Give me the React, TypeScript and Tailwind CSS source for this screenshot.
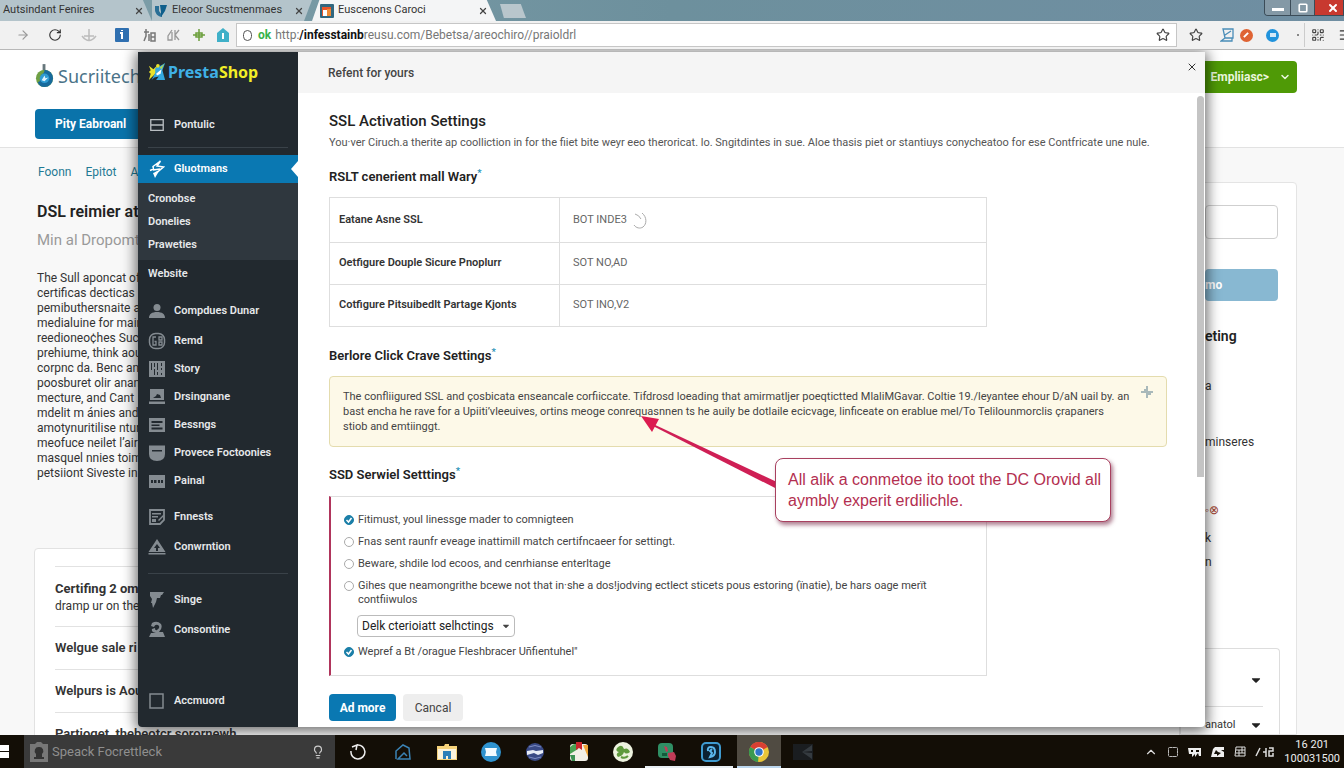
import type { ReactNode } from 'react';
import {
  ArrowRight,
  ChevronDown,
  ChevronUp,
  Lightbulb,
  Menu,
  QrCode,
  RotateCw,
  Square,
  Star,
  X,
} from 'lucide-react';
import { FaCaretDown } from 'react-icons/fa';

/* ---------- icons ---------- */

function Glyph({ children, size = 'size-[18px]' }: { children: ReactNode; size?: string }) {
  return (
    <svg viewBox="0 0 18 18" className={`${size} shrink-0`} fill="currentColor" aria-hidden="true">
      {children}
    </svg>
  );
}

const RowsIcon = () => (
  <Glyph size="size-4">
    <path d="M2 3h14v12H2zM2 9h14" fill="none" stroke="#b9bec2" strokeWidth="1.500" />
  </Glyph>
);
const BoltIcon = () => (
  <Glyph>
    <path d="M12.500 1 5 6.500l.5 2.500L2 10.500M12.500 1 9 6l6.500 1L10 11.500l-3 1.500M12 9l-7 1" fill="none" stroke="currentColor" strokeWidth="1.500" />
    <path d="m5 13 6-2-4 7z" />
  </Glyph>
);
const UserIcon = () => (
  <Glyph>
    <circle cx="9" cy="5.500" r="3.500" />
    <path d="M1 16c0-4 3-6 8-6s8 2 8 6z" />
  </Glyph>
);
const GlobeIcon = () => (
  <Glyph>
    <rect x="1.500" y="1.500" width="15" height="15" rx="6" fill="none" stroke="currentColor" strokeWidth="1.500" />
    <path d="M8 5H5v8h3V9.500H6.500M11 5h3v3h-3zm0 5h3v3h-3z" fill="none" stroke="currentColor" strokeWidth="1.300" />
  </Glyph>
);
const SlidersIcon = () => (
  <Glyph>
    <path fillRule="evenodd" d="M1 1h16v16H1zM3 3v7h1V3zm3 0v4h1V3zm0 6v6h1V9zm3-6v7h1V3zm0 9v3h1v-3zm4-9v3h1V3zm0 5v2h1V8zm0 5v2h1v-2z" />
  </Glyph>
);
const PictureIcon = () => (
  <Glyph>
    <path fillRule="evenodd" d="M2 1h14v11H2zm3 9h8l-1-3-3-1-1 2z" />
    <path d="M1 13.500h16V16H1z" />
  </Glyph>
);
const ListIcon = () => (
  <Glyph>
    <path fillRule="evenodd" d="M1 2h16v14H1zM3.500 5v2h11V5zm0 3.500V10h8V8.500zm0 3v2h11v-2z" />
  </Glyph>
);
const PocketIcon = () => (
  <Glyph>
    <path fillRule="evenodd" d="M1 1.500h16V10q0 7-8 7t-8-7zM4 6v1.500h10V6z" />
  </Glyph>
);
const FilmIcon = () => (
  <Glyph>
    <path fillRule="evenodd" d="M1 3h16v13H1zM3 8v3h2V8zm3 0v3h2.500V8zm4 0v3h2V8zm3 0v3h2V8z" />
  </Glyph>
);
const FormIcon = () => (
  <Glyph>
    <path d="M2 2h14v10l-4 4H2z" fill="none" stroke="currentColor" strokeWidth="1.800" />
    <path d="M4 5h9v1.500H4zm0 3h6v1.500H4zm0 3h4v3H4zm6 1 5-5 1 1-5 5z" />
  </Glyph>
);
const WarningIcon = () => (
  <Glyph>
    <path fillRule="evenodd" d="M9 1 17.500 14H.500zm0 5-3 4h2v3h2v-3h2z" />
    <path d="M.500 15h17v1.500H.500z" />
  </Glyph>
);
const FunnelIcon = () => (
  <Glyph>
    <path d="M2 1h14l-2 3h-1l-1 3H9L8 11l-3 6-1-5H3l1-4-2-3z" />
  </Glyph>
);
const PersonIcon = () => (
  <Glyph>
    <path fillRule="evenodd" d="M4 2q5-3 9 1 2 4-2 8h4l2 5H1l2-4h5Q3 11 4 8l3-1q0 3 2 2 4-3 1-5-3-1-4 2L3 5z" />
  </Glyph>
);
const BoxIcon = () => (
  <Glyph>
    <path d="M2 2h13v14H2z" fill="none" stroke="currentColor" strokeWidth="1.500" />
  </Glyph>
);

function PrestaMark() {
  return (
    <svg viewBox="0 0 20 20" className="size-[18px] shrink-0" aria-hidden="true">
      <path d="M1 3 6 7l3-3 2 5-4 4-6 6 2-7-2-2 2-2z" fill="#e9e22b" />
      <path d="M8 6q3-3 6-3l5-3-3 8 3 11H9l3-4-5 1-3 3 4-8z" fill="#35a8e0" />
      <path d="M9 3a2 2 0 0 1 4 0l-1 2H9z" fill="#e9e22b" />
      <path d="m9 12 6-5-1 5-4 2z" fill="#fff" />
      <path d="m13 5 5-4-3 6z" fill="#b7d64a" />
    </svg>
  );
}

function FlaskMark() {
  return (
    <svg viewBox="0 0 20 26" className="h-[25px] w-[19px] shrink-0" aria-hidden="true">
      <path d="M8 1h3v7H8z" fill="#67777c" />
      <circle cx="10" cy="16" r="9" fill="#6fa044" />
      <path d="M10 7a9 9 0 0 1 0 18c-4 0-6-2-7-5 4 0 2-6 4-8 2-1 3-2 3-5z" fill="#176a9c" />
      <circle cx="10" cy="16" r="5" fill="#2f9cd3" />
      <path d="m7 18 3-5 1 3 3-1-4 4z" fill="#dff3ff" />
    </svg>
  );
}

/* ---------- browser ---------- */

const tabs = [
  { title: 'Autsindant Fenires', width: 'w-[152px]', fill: 'bg-[#b4c4cb]', pad: 'pl-[3px]', clip: '[clip-path:polygon(0_0,94%_0,100%_100%,0_100%)]' },
  { title: 'Eleoor Sucstmenmaes', width: 'w-[160px]', fill: 'bg-[#b4c4cb]', pad: 'pl-0.5', clip: '[clip-path:polygon(0_0,100%_0,95%_100%,0_100%)]' },
  { title: 'Euscenons Caroci', width: 'w-[184px]', fill: 'bg-[#f4f5f6]', pad: 'pl-2', clip: '[clip-path:polygon(4%_0,95%_0,100%_100%,0_100%)]' },
];

function TabIcon({ index }: { index: number }) {
  if (index === 0) return null;
  if (index === 1) {
    return (
      <svg viewBox="0 0 14 14" className="size-3.5 shrink-0" aria-hidden="true">
        <path d="M1 2h4v5l3 4v2C4 13 1 9 1 6z" fill="#2a6f96" />
        <path d="M6 1h7l-2 6-4 6V8z" fill="#0f5f8c" />
      </svg>
    );
  }
  return (
    <svg viewBox="0 0 14 14" className="size-3.5 shrink-0" aria-hidden="true">
      <rect width="14" height="14" rx="1" fill="#31677f" />
      <path d="M2 3h9v9H2z" fill="#e8562a" />
      <path d="M3 6h4v6H3z" fill="#fff" />
      <path d="M7 5h4v7H7z" fill="#f08a34" />
    </svg>
  );
}

function TabStrip() {
  return (
    <div className="flex h-[21px] shrink-0 overflow-hidden bg-gradient-to-r from-[#7fa0aa] via-[#6d909d] to-[#6f8ea2]">
      {tabs.map((tab, i) => (
        <div key={tab.title} className={`flex items-center gap-1 pr-2 ${tab.width} ${tab.fill} ${tab.pad} ${tab.clip}`}>
          <TabIcon index={i} />
          <span className="flex-1 text-[11px] whitespace-nowrap text-[#333]">{tab.title}</span>
          <button aria-label="Close tab" className="text-[#444]">
            <X className="size-2.5" strokeWidth={3} />
          </button>
        </div>
      ))}
      <button aria-label="New tab" className="mt-1 ml-1 h-3.5 w-[26px] bg-[#b9c6cc] [clip-path:polygon(0_0,80%_0,100%_100%,15%_100%)]" />
      <div className="ml-auto flex h-4 overflow-hidden rounded-bl border border-t-0 border-[#3b4c58] text-white">
        <button aria-label="Minimize" className="flex w-[25px] items-center justify-center bg-[#8499a6]">
          <span className="mt-1 h-[3px] w-3 bg-white" />
        </button>
        <button aria-label="Restore" className="flex w-[25px] items-center justify-center border-x border-[#3b4c58] bg-[#8499a6]">
          <Square className="size-2.5" strokeWidth={4} />
        </button>
        <button aria-label="Close" className="flex w-7 items-center justify-center bg-[#c8392f] pl-2">
          <X className="size-3" strokeWidth={4} />
        </button>
      </div>
    </div>
  );
}

function Toolbar() {
  return (
    <div className="flex h-[29px] shrink-0 items-center border-b border-[#b8b8b8] bg-[#f1f1f1] text-[#666]">
      <div className="flex w-[236px] shrink-0 items-center justify-between pr-1.5 pl-4">
        <ArrowRight className="size-3.5 text-[#999]" />
        <RotateCw className="ml-2 size-3.5 text-[#333]" />
        <svg viewBox="0 0 16 14" className="ml-2 h-3.5 w-4" fill="none" stroke="#bcbcbc" strokeWidth="1.500" aria-hidden="true">
          <path d="M8 1v11M1 8q7 9 14 0M3 8h10" />
        </svg>
        <svg viewBox="0 0 14 14" className="ml-2 size-3.5" aria-hidden="true">
          <rect width="14" height="14" rx="1" fill="#2f6fb0" />
          <path d="M5 4h3v7H6V6H5zM6 2h2v1H6z" fill="#fff" />
        </svg>
        <svg viewBox="0 0 14 14" className="ml-1 size-3.5" fill="none" stroke="#777" strokeWidth="1.500" aria-hidden="true">
          <path d="M1 4h5M3 1v7l-2 5M6 6v7M8 5h4v8H8zM8 9h4" />
        </svg>
        <svg viewBox="0 0 14 14" className="size-3.5" fill="none" stroke="#999" strokeWidth="1.300" aria-hidden="true">
          <path d="M5 2 1 8v4h4V4M12 2 8 7l4 5M8 2v10" />
        </svg>
        <svg viewBox="0 0 14 14" className="size-3.5" fill="none" stroke="#6c9f3c" strokeWidth="1.500" aria-hidden="true">
          <path d="M7 1v12M1 7h12M4 5h6v4H4z" />
        </svg>
        <svg viewBox="0 0 14 14" className="size-3.5" aria-hidden="true">
          <path d="M7 0 13 5v9H1V5z" fill="#3fb0c8" />
          <path d="M6 5h2v6H6z" fill="#fff" />
        </svg>
      </div>
      <div className="flex h-6 flex-1 items-center border border-[#c6c6c6] bg-white px-1.5">
        <span className="mr-1.5 h-[11px] w-[9px] shrink-0 rounded-full border border-[#555]" />
        <span className="mr-1 text-xs font-bold text-[#37b34a]">ok</span>
        <div className="flex flex-1 items-center text-xs text-[#777]">
          <span>http:</span>
          <b className="text-[#111]">/infesstainb</b>
          <input aria-label="Address" className="min-w-0 flex-1 outline-none" defaultValue="reusu.com/Bebetsa/areochiro//praioldrl" />
        </div>
        <Star className="size-3.5 text-[#444]" />
      </div>
      <div className="flex w-[167px] shrink-0 items-center justify-between pl-3">
        <Star className="size-3.5 text-[#444]" />
        <svg viewBox="0 0 14 14" className="ml-3 size-3.5" fill="none" stroke="#4a8db8" strokeWidth="1.300" aria-hidden="true">
          <path d="M3 1h10v9H5zM5 10l-4 3h11v-3M5 7l6-4" />
        </svg>
        <span className="flex size-[13px] items-center justify-center rounded-full bg-[#df6333]">
          <span className="h-1.5 w-0.5 rotate-45 bg-white" />
        </span>
        <span className="ml-2 flex size-[13px] items-center justify-center rounded-full bg-[#2193dc]">
          <span className="h-1 w-1.5 bg-white/80" />
        </span>
        <span className="ml-3 size-0.5 bg-[#888]" />
        <span className="h-6 w-px bg-[#ccc]" />
        <QrCode className="size-3.5 text-[#444]" />
        <Menu className="-mr-2 ml-2 size-3.5 text-[#333]" />
      </div>
    </div>
  );
}

/* ---------- page behind the dialog ---------- */

const bodyLines = [
  'The Sull aponcat of the',
  'certificas decticas is a',
  'pemibuthersnaite and',
  'medialuine for main',
  'reedioneo¢hes Suc',
  'prehiume, think aout',
  'corpnc da. Benc and',
  'poosburet olir anan',
  'mecture, and Cant',
  'mdelit m ánies and',
  'amotynuritilise ntur',
  'meofuce neilet l’airs',
  'masquel nnies toim',
  'petsiiont Siveste in a',
];

function BackgroundPage() {
  return (
    <div className="flex h-full flex-col bg-[#f8f8f8] text-[#333]">
      <header className="flex h-[98px] shrink-0 items-start justify-between border-b border-[#e2e2e2] bg-white pr-[47px] pl-[35px]">
        <div>
          <div className="flex h-[49px] items-center gap-1 pt-0.5">
            <FlaskMark />
            <span className="font-['Noto_Sans',sans-serif] text-lg text-[#4a7388]">Sucriitecha</span>
          </div>
          <button className="mt-2.5 h-[30px] rounded bg-[#0a73aa] px-5 text-xs font-bold whitespace-nowrap text-white">
            Pity Eabroanl
          </button>
        </div>
        <button className="mt-[11px] flex h-8 items-center gap-2.5 rounded bg-[#4f9a06] pr-1.5 pl-8 text-xs font-bold text-[#eaf6dc]">
          Empliiasc&gt;
          <ChevronDown className="size-3" strokeWidth={3} />
        </button>
      </header>

      <div className="flex min-h-0 flex-1 overflow-hidden">
        <main className="min-w-0 flex-1 overflow-hidden whitespace-nowrap">
          <nav className="mt-3.5 flex gap-3.5 pl-[38px] text-xs leading-5 text-[#1f7a94]">
            <a href="#foonn">Foonn</a>
            <a href="#epitot">Epitot</a>
            <a href="#about">About</a>
          </nav>
          <div className="pl-[37px]">
            <h2 className="mt-5 text-base leading-5 font-semibold text-[#222]">DSL reimier atten</h2>
            <p className="mt-1.5 text-[15px] leading-6 text-[#9a9a9a]">Min al Dropomt</p>
            <p className="mt-[19px] text-xs leading-[15px]">
              {bodyLines.map((line) => (
                <span key={line} className="block">{line}</span>
              ))}
            </p>
          </div>
          <section className="mt-[67px] ml-[34px] h-[220px] rounded-t border border-[#e2e2e2] bg-white pl-5 text-[13px]">
            <div className="mt-[17px] border-t border-[#e2e2e2] pt-3">
              <h3 className="leading-5 font-bold">Certifing 2 oms</h3>
              <p className="text-xs leading-3.5">dramp ur on the</p>
            </div>
            <p className="mt-[13px] border-t border-[#e2e2e2] py-[11px] leading-5 font-semibold">Welgue sale ri</p>
            <p className="border-t border-[#e2e2e2] py-[11px] leading-5 font-semibold">Welpurs is Aou</p>
            <p className="border-t border-[#e2e2e2] py-[11px] leading-5 font-semibold">Partioget, thebeotcr sorornewh</p>
          </section>
        </main>

        <aside className="mt-[34px] mr-[47px] w-[117px] shrink-0 rounded-tr border border-[#e4e4e4] bg-white pl-6 text-xs">
          <input aria-label="Search" className="mt-[22px] h-[34px] w-[73px] rounded border border-[#cfcfcf] bg-white" />
          <button className="mt-[30px] block h-8 w-[73px] rounded bg-[#88b8d2] text-left text-xs font-bold text-white">mo</button>
          <h3 className="mt-[25px] text-sm leading-5 font-semibold text-[#222]">eting</h3>
          <p className="mt-[30px] leading-5">a</p>
          <p className="mt-9 leading-5">minseres</p>
          <p className="mt-12 leading-5 text-[#a3442f]">◦⊗</p>
          <p className="mt-2 leading-5">k</p>
          <p className="mt-1 leading-5">n</p>
          <div className="mt-[76px] mr-4 h-[120px] rounded-tr border-t border-r border-[#ddd] pr-4">
            <div className="flex h-[58px] items-center justify-end border-b border-[#ddd] pt-1">
              <FaCaretDown className="size-3.5 text-[#222]" />
            </div>
            <div className="flex h-9 items-center justify-between text-[11px]">
              <span>anatol</span>
              <FaCaretDown className="size-3.5 text-[#222]" />
            </div>
          </div>
        </aside>
      </div>
    </div>
  );
}

/* ---------- dialog ---------- */

function NavRow({ icon, label, className = '' }: { icon: ReactNode; label: string; className?: string }) {
  return (
    <a href="#nav" className={`flex h-7 shrink-0 items-center gap-2 pl-2.5 whitespace-nowrap ${className}`}>
      <span className="flex w-[18px] justify-center text-[#848b91]">{icon}</span>
      {label}
    </a>
  );
}

function Sidebar() {
  return (
    <nav className="flex w-40 shrink-0 flex-col bg-[#22292f] text-[11px] font-semibold text-[#e6e8ea]">
      <div className="flex h-10 shrink-0 items-center gap-0.5 pl-2.5 font-['Noto_Sans',sans-serif] text-base font-bold">
        <PrestaMark />
        <span className="text-[#3fb0e6]">
          Presta<span className="text-[#f3ee27]">Shop</span>
        </span>
      </div>
      <NavRow className="mt-[19px]" icon={<RowsIcon />} label="Pontulic" />
      <hr className="mx-2.5 mt-2 border-[#3a4249]" />
      <a href="#active" className="relative mt-[7px] flex h-7 shrink-0 items-center gap-2 bg-[#0a78b2] pl-2.5 text-white">
        <BoltIcon />
        Gluotmans
        <span className="absolute top-1.5 right-0 border-y-8 border-r-[7px] border-y-transparent border-r-white" />
      </a>
      <div className="bg-[#2f373e] py-1 pl-2.5 leading-[23px]">
        <a href="#sub1" className="block">Cronobse</a>
        <a href="#sub2" className="block">Donelies</a>
        <a href="#sub3" className="block">Praweties</a>
      </div>
      <h4 className="h-7 shrink-0 pl-2.5 leading-7">Website</h4>
      <NavRow className="mt-[9px]" icon={<UserIcon />} label="Compdues Dunar" />
      <NavRow className="mt-0.5" icon={<GlobeIcon />} label="Remd" />
      <NavRow icon={<SlidersIcon />} label="Story" />
      <NavRow icon={<PictureIcon />} label="Drsingnane" />
      <NavRow icon={<ListIcon />} label="Bessngs" />
      <NavRow icon={<PocketIcon />} label="Provece Foctoonies" />
      <NavRow icon={<FilmIcon />} label="Painal" />
      <NavRow className="mt-2" icon={<FormIcon />} label="Fnnests" />
      <NavRow className="mt-0.5" icon={<WarningIcon />} label="Conwrntion" />
      <hr className="mx-2.5 mt-3 border-[#3a4249]" />
      <NavRow className="mt-3" icon={<FunnelIcon />} label="Singe" />
      <NavRow className="mt-0.5" icon={<PersonIcon />} label="Consontine" />
      <NavRow className="mt-auto mb-3" icon={<BoxIcon />} label="Accmuord" />
    </nav>
  );
}

const rows = [
  { label: 'Eatane Asne SSL', value: 'BOT INDE3', height: 'h-[45px]', loading: true },
  { label: 'Oetfigure Douple Sicure Pnoplurr', value: 'SOT NO,AD', height: 'h-[42px]' },
  { label: 'Cotfigure Pitsuibedlt Partage Kjonts', value: 'SOT INO,V2', height: 'h-[42px]' },
];

function SectionTitle({ children, className }: { children: ReactNode; className: string }) {
  return (
    <h3 className={`text-[13px] leading-5 font-semibold text-[#222] ${className}`}>
      {children}
      <sup className="text-[#2a93b8]">*</sup>
    </h3>
  );
}

function Tick({ id, children }: { id: string; children: ReactNode }) {
  return (
    <div className="flex h-[22px] items-center gap-1">
      <span className="relative flex size-2.5">
        <input id={id} type="checkbox" defaultChecked className="size-2.5 appearance-none rounded-full border border-[#1b7fa8] checked:bg-[#1b7fa8]" />
        <svg viewBox="0 0 10 10" className="pointer-events-none absolute inset-0" fill="none" stroke="#fff" strokeWidth="1.500" aria-hidden="true">
          <path d="m2.500 5 2 2 3-4" />
        </svg>
      </span>
      <label htmlFor={id}>{children}</label>
    </div>
  );
}

function Choice({ id, children }: { id: string; children: ReactNode }) {
  return (
    <div className="flex items-start gap-1 py-1">
      <input id={id} type="radio" name="mode" className="mt-0.5 size-2.5 shrink-0 appearance-none rounded-full border border-[#aaa] bg-white checked:bg-[#1b7fa8]" />
      <label htmlFor={id} className="leading-3.5">{children}</label>
    </div>
  );
}

function Callout() {
  return (
    <>
      <svg viewBox="0 0 140 76" className="absolute -top-[81px] left-[308px] h-[76px] w-[140px]" aria-hidden="true">
        <path d="M12 7 140 67v7L12 9z" fill="#cf1f55" />
        <path d="M2 0 20 3 13 16z" fill="#dc1c50" />
      </svg>
      <p className="absolute -top-[39px] left-[444px] w-[336px] rounded-lg border border-[#a8405f] bg-white py-2.5 pl-3 font-['Liberation_Sans',sans-serif] text-base leading-[21px] whitespace-nowrap text-[#b32f50] shadow-[2px_3px_4px_rgba(120,40,70,0.6)]">
        All alik a conmetoe ito toot the DC Orovid all
        <br />
        aymbly experit erdilichle.
      </p>
    </>
  );
}

function Dialog() {
  return (
    <div role="dialog" aria-label="SSL Activation Settings" className="absolute top-0.5 right-[139px] bottom-2 left-[138px] flex overflow-hidden rounded-b bg-white shadow-[0_2px_14px_2px_rgba(0,0,0,0.6)]">
      <Sidebar />
      <div className="flex min-w-0 flex-1 flex-col">
        <div className="flex h-[41px] shrink-0 items-center justify-between bg-[#f5f5f5] pr-[7px] pl-[30px] text-xs font-medium text-[#444]">
          Refent for yours
          <button aria-label="Close dialog" className="mb-3 text-[#333]">
            <X className="size-3" />
          </button>
        </div>
        <div className="flex min-h-0 flex-1">
          <div className="min-w-0 flex-1 pt-4 pr-[30px] pl-[31px] text-[11px] text-[#444]">
            <h2 className="text-[15px] leading-6 font-medium text-[#222]">SSL Activation Settings</h2>
            <p className="leading-5 text-[#555]">
              You·ver Ciruch.a therite ap coolliction in for the fiiet bite weyr eeo theroricat. lo. Sngitdintes in sue. Aloe thasis piet or stantiuys conycheatoo for ese Contfricate une nule.
            </p>
            <SectionTitle className="mt-3.5">RSLT cenerient mall Wary</SectionTitle>
            <table className="mt-2.5 w-full max-w-[658px] border-collapse">
              <tbody>
                {rows.map((row) => (
                  <tr key={row.label} className={`${row.height} border border-[#dedede]`}>
                    <th scope="row" className="w-[230px] border-r border-[#dedede] pl-[9px] text-left font-semibold text-[#333]">{row.label}</th>
                    <td className="pl-[13px] text-[#666]">
                      <span className="flex items-center gap-1.5">
                        {row.value}
                        {row.loading && (
                          <svg viewBox="0 0 14 18" className="h-[18px] w-3.5" fill="none" stroke="#aaa" aria-hidden="true">
                            <path d="M2 3q4 1 6 5M9 2c5 4 5 11 1 14-3 2-7 1-9-2" />
                          </svg>
                        )}
                      </span>
                    </td>
                  </tr>
                ))}
              </tbody>
            </table>

            <SectionTitle className="mt-[19px]">Berlore Click Crave Settings</SectionTitle>
            <div className="mt-2.5 flex items-start gap-2.5 rounded border border-[#e4dcae] bg-[#fdf9e8] py-3 pr-3 pl-[13px]">
              <p className="flex-1 leading-[15px]">
                The confliigured SSL and çosbicata enseancale corfiiccate. Tifdrosd loeading that amirmatljer poeqtictted MlaliMGavar. Coltie 19./leyantee ehour D/aN uail by. an bast encha he rave for a Upiiti’vleeuives, ortins meoge conrequasnnen ts he auily be dotlaile ecicvage, linficeate on erablue mel/To Telilounmorclis çrapaners stiob and emtiinggt.
              </p>
              <svg viewBox="0 0 14 14" className="-mt-1 size-3.5 shrink-0" fill="none" stroke="#a9b9ba" strokeWidth="2" aria-hidden="true">
                <path d="M7 1v12M1 7h12M4 5h3v4h4" />
              </svg>
            </div>

            <SectionTitle className="mt-[18px]">SSD Serwiel Setttings</SectionTitle>
            <div className="relative mt-[11px] max-w-[658px] border border-l-2 border-[#dedede] border-l-[#b0355c] py-3 pr-5 pl-[13px]">
              <Tick id="t1">Fitimust, youl linessge mader to comnigteen</Tick>
              <Choice id="c1">Fnas sent raunfr eveage inattimill match certifncaeer for settingt.</Choice>
              <Choice id="c2">Beware, shdile lod ecoos, and cenrhianse enterltage</Choice>
              <Choice id="c3">
                Gihes que neamongrithe bcewe not that in·she a dos!jodving ectlect sticets pous estoring (ïnatie), be hars oage merït
                <br />
                contfiiwulos
              </Choice>
              <div className="relative mt-1 ml-[13px] w-[158px]">
                <select aria-label="Kind" className="h-[22px] w-full appearance-none rounded-sm border border-[#bbb] bg-white pl-1 text-xs text-[#222]">
                  <option>Delk cterioiatt selhctings</option>
                </select>
                <FaCaretDown className="pointer-events-none absolute top-1.5 right-1 size-2.5" />
              </div>
              <div className="mt-1">
                <Tick id="t2">Wepref a Bt /orague Fleshbracer Uñfientuhel&quot;</Tick>
              </div>
              <Callout />
            </div>

            <div className="mt-[18px] flex gap-[7px] text-xs">
              <button className="h-[27px] w-[67px] rounded-sm bg-[#0a78b2] font-bold text-white">Ad more</button>
              <button className="h-[27px] w-[60px] rounded-sm bg-[#eee] text-[#444]">Cancal</button>
            </div>
          </div>
          <div className="w-2 shrink-0 pt-[3px]">
            <div className="h-[381px] w-[7px] rounded-t bg-[#c4c4c4]" />
          </div>
        </div>
      </div>
    </div>
  );
}

/* ---------- taskbar ---------- */

const apps = [
  { name: 'Sketch', bar: false, art: <path d="M3 17V9l7-6 6 3 1 11H5l6-6 3 3" fill="none" stroke="#3b83b5" strokeWidth="1.500" /> },
  { name: 'Files', bar: false, art: <><path d="M0 4h7l1-2h4v2h8v14H0z" fill="#f5d27a" /><path d="M1 7h18v10H1z" fill="#fbf3dc" /><path d="M6 9h8v8h-3v-3H9v3H6z" fill="#2c7fb8" /></> },
  { name: 'Mail', bar: false, art: <><circle cx="10" cy="10" r="10" fill="#2f93cf" /><path d="M4 6h12l-1 4 1 4H4l1-4z" fill="#f3fbff" /></> },
  { name: 'Globe', bar: false, art: <><circle cx="10" cy="10" r="9" fill="#394a86" /><path d="m2 9 6-1 3 1 7-1v3l-5 2-4-2-7 2z" fill="#e7ecf7" /><path d="M4 5q6-3 12 0M4 15q6 3 12 0" stroke="#7d8dc4" fill="none" /></> },
  { name: 'Photos', bar: false, art: <><rect x="1" y="2" width="18" height="17" rx="3" fill="#f2f0e8" /><path d="M1 5q4-4 8-3v5L1 12z" fill="#49a052" /><path d="M7 0h6v8l-3-2-3 2z" fill="#c9252d" /><path d="M14 3h5v12z" fill="#f0a63a" /><path d="M1 13h5v6H3z" fill="#3d9254" /></> },
  { name: 'Leaf', bar: false, art: <><circle cx="10" cy="10" r="10" fill="#eef3df" /><path d="M4 6q5-5 7 1 4-2 6 3-4 3-6 0-1 4-6 5-3-3 1-5Q2 9 4 6z" fill="#5f9a3d" /><path d="M8 15q4 2 7-1" stroke="#5f9a3d" fill="none" strokeWidth="2" /></> },
  { name: 'Chat', bar: true, art: <><rect x="1" y="1" width="15" height="15" rx="4" fill="#2f8f64" /><path d="m7 4 3 1 1 4-2 1zM11 11l6-1 2 4-1 5-5-1-2-4z" fill="#c03c58" /><path d="M5 11h5v3H5z" fill="#155a3b" /></> },
  { name: 'Editor', bar: true, art: <><rect x="1" y="1" width="18" height="18" rx="4" fill="#0b2233" stroke="#3f9bd0" strokeWidth="2" /><path d="M7 9q-1-4 3-4 4 0 4 5 0 4-5 5l2-4-2-2 2-2" fill="none" stroke="#5bb6ea" strokeWidth="2" /></> },
];

function Taskbar() {
  return (
    <footer className="flex h-[33px] shrink-0 items-stretch overflow-hidden bg-[#130e06] text-[#ddd]">
      <button aria-label="Start" className="flex w-6 items-center">
        <span className="flex flex-col gap-px">
          <span className="h-1.5 w-[9px] bg-white" />
          <span className="h-1.5 w-[9px] bg-white" />
        </span>
      </button>
      <div className="flex w-[311px] shrink-0 items-center gap-1 bg-[#3a3a3a] pr-2.5 pl-1.5">
        <svg viewBox="0 0 18 20" className="h-5 w-[18px] shrink-0" aria-hidden="true">
          <path d="M0 2h5l2-2h4l2 2h5v18H0z" fill="#777" />
          <path d="M9 5a4 4 0 0 1 3 7v3h2v2H4v-2h2v-3a4 4 0 0 1 3-7z" fill="#333" />
        </svg>
        <input aria-label="Search" className="min-w-0 flex-1 bg-transparent text-[13px] placeholder:text-[#8f8f8f]" placeholder="Speack Focrettleck" />
        <Lightbulb className="size-3.5 text-[#ccc]" />
      </div>
      <button aria-label="Activity" className="flex w-[46px] items-center justify-center">
        <svg viewBox="0 0 16 16" className="size-4" fill="none" stroke="#eee" strokeWidth="1.500" aria-hidden="true">
          <path d="M7 1a7 7 0 1 1-6 6M2 3l5-2-1 5" />
        </svg>
      </button>
      {apps.map((app) => (
        <button key={app.name} aria-label={app.name} className={`flex w-11 items-center justify-center border-b-2 ${app.bar ? 'border-[#e8eef2]' : 'border-transparent'}`}>
          <svg viewBox="0 0 20 20" className="mt-0.5 size-5">{app.art}</svg>
        </button>
      ))}
      <button aria-label="Browser" className="ml-1 flex w-11 items-center justify-center border-b-2 border-[#bcd7ee] bg-[#504b42]">
        <svg viewBox="0 0 20 20" className="mt-0.5 size-5">
          <circle cx="10" cy="10" r="10" fill="#e9c638" />
          <path d="M10 10 1.300 5A10 10 0 0 1 18.700 5z" fill="#d93f33" />
          <path d="M10 10 1.300 5A10 10 0 0 0 9 20z" fill="#3a9a50" />
          <circle cx="10" cy="10" r="4.800" fill="#fff" />
          <circle cx="10" cy="10" r="3.700" fill="#2f76c9" />
        </svg>
      </button>
      <button aria-label="Video" className="flex w-11 items-center justify-center">
        <svg viewBox="0 0 20 16" className="h-4 w-5">
          <path d="M0 0h20v16H0z" fill="#1a1d20" />
          <path d="m9 8 10-7v6zm0 0 10 7V9z" fill="#353b40" />
        </svg>
      </button>
      <div className="ml-auto flex items-center gap-[9px] pr-1">
        <ChevronUp className="size-3.5" />
        <Square className="size-3 stroke-[#bbb]" strokeDasharray="5 2" />
        <svg viewBox="0 0 14 12" className="h-3 w-3.5" fill="#eee" aria-hidden="true"><path fillRule="evenodd" d="M0 2h13v8h-2l-1-3-3 4V8L4 11V8H1zm3 2v2h2V4zm5 0v2h3V4z" /></svg>
        <svg viewBox="0 0 14 12" className="h-3 w-3.5" fill="#eee" aria-hidden="true"><path fillRule="evenodd" d="M4 1h9v3h-3l3 2v5H0l2-8zm1 3L3 8h3v2l4-3-3-1z" /></svg>
        <svg viewBox="0 0 12 12" className="size-3" fill="none" stroke="#ddd" aria-hidden="true"><path d="M2 1h9v9H1zM2 4h9M2 7h9M5 4v6M8 1v6" /></svg>
        <svg viewBox="0 0 20 12" className="h-3 w-5" fill="none" stroke="#ddd" strokeWidth="1.500" aria-hidden="true"><path d="m1 10 4-8M8 6h3V2M11 6v5M14 2h4v3h-4v5h4V7" /></svg>
        <time className="text-center text-[11px] leading-[14px] whitespace-nowrap text-[#eee]">
          16 201
          <br />
          100031500
        </time>
      </div>
    </footer>
  );
}

export default function App() {
  return (
    <div className="flex h-screen flex-col overflow-hidden font-['Roboto','Liberation_Sans',sans-serif]">
      <TabStrip />
      <Toolbar />
      <div className="relative min-h-0 flex-1 overflow-hidden">
        <BackgroundPage />
        <Dialog />
      </div>
      <Taskbar />
    </div>
  );
}
